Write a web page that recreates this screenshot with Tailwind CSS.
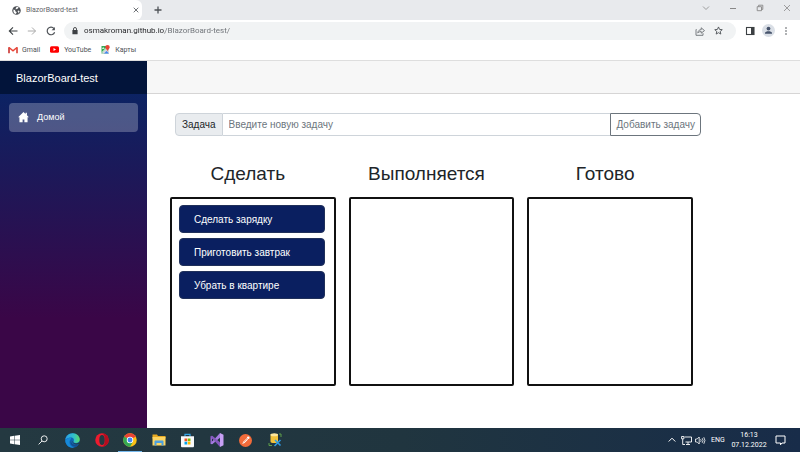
<!DOCTYPE html>
<html lang="ru">
<head>
<meta charset="utf-8">
<title>BlazorBoard-test</title>
<script src="https://cdn.jsdelivr.net/npm/@tailwindcss/browser@4"></script>
</head>
<body class="h-screen flex flex-col overflow-hidden bg-white font-[Roboto,Arial,sans-serif] text-[#212529]">

<!-- Browser chrome -->
<header class="shrink-0 text-[7px] leading-[10px] text-[#5f6368]">
  <div class="flex h-5 bg-[#e8eaed]">
    <div class="flex w-[142px] items-center gap-[5px] rounded-r-md bg-white pl-3 pr-[1px]">
      <svg class="size-[9px] shrink-0" viewBox="0 0 18 18"><circle cx="9" cy="9" r="8.5" fill="#4d5156"/><path d="M3 7l3 1 1 3 2 1v2l-2 2C4 15 2 12 3 7zM9 2h4l-1 3-3 1-1 1-1-1 1-2zM12 9l3 1c0 2-1 4-3 5l1-3-2-1z" fill="#fff"/></svg>
      <span class="grow">BlazorBoard-test</span>
      <button aria-label="Закрыть вкладку" class="p-[2px]"><svg class="size-[6px]" viewBox="0 0 6 6" stroke="#5f6368" stroke-width=".9"><path d="M.7.7l4.600 4.600M5.300.7L.7 5.300"/></svg></button>
    </div>
    <button aria-label="Новая вкладка" class="ml-3 flex items-center"><svg class="size-2" viewBox="0 0 8 8" stroke="#4d5156" stroke-width="1.3"><path d="M4 .5v7M.5 4h7"/></svg></button>
    <div class="ml-auto flex h-4 items-center text-[#888]">
      <button aria-label="Поиск вкладок" class="flex w-[27px] justify-center"><svg class="size-2" viewBox="0 0 8 8" fill="none" stroke="currentColor" stroke-width=".8"><path d="M1 2.5l3 3 3-3"/></svg></button>
      <button aria-label="Свернуть" class="flex w-[27px] justify-center"><svg class="size-2" viewBox="0 0 8 8" stroke="currentColor"><path d="M1 4.5h6"/></svg></button>
      <button aria-label="Развернуть" class="flex w-[27px] justify-center"><svg class="size-2" viewBox="0 0 8 8" fill="none" stroke="currentColor" stroke-width=".9"><path d="M1.2 2.7h4.3v4H1.2zM2.6 2.7V1.2h4.2v4.2H5.5"/></svg></button>
      <button aria-label="Закрыть" class="flex w-[27px] justify-center"><svg class="size-2" viewBox="0 0 8 8" stroke="currentColor" stroke-width=".8"><path d="M1 1l6 6M7 1L1 7"/></svg></button>
    </div>
  </div>
  <div class="flex h-[21px] items-center pl-2 pr-[10px]">
    <button aria-label="Назад"><svg class="size-[10px]" viewBox="0 0 10 10" fill="none" stroke="#3c4043" stroke-width="1.1"><path d="M9.500 5H1.500M5 1.300L1.300 5 5 8.700"/></svg></button>
    <button aria-label="Вперёд" class="ml-[9px]"><svg class="size-[10px]" viewBox="0 0 10 10" fill="none" stroke="#aaa" stroke-width="1"><path d="M.8 5h7.7M5 1.5L8.5 5 5 8.5"/></svg></button>
    <button aria-label="Обновить" class="ml-[9px]"><svg class="size-[10px]" viewBox="0 0 10 10" fill="none" stroke="#4d5156" stroke-width="1.2"><path d="M8.6 6.2A3.8 3.8 0 1 1 8 2.6"/><path d="M5.6 4.2h3.300V1z" fill="#4d5156" stroke="none"/></svg></button>
    <div class="ml-2 flex h-[18px] grow items-center rounded-full bg-[#f1f3f4] pl-2 pr-1">
      <svg class="h-2 w-[6px]" viewBox="0 0 6 8"><path d="M1.5 3V2a1.5 1.5 0 0 1 3 0v1" fill="none" stroke="#3c4043" stroke-width=".9"/><rect x=".4" y="2.9" width="5.2" height="4.4" rx=".5" fill="#3c4043"/></svg>
      <input aria-label="Адресная строка" value="osmakroman.github.io/BlazorBoard-test/" class="ml-[6px] min-w-0 grow bg-[linear-gradient(90deg,#202124_81px,#6b6f74_81px)] bg-clip-text text-[8px] text-transparent">
      <button aria-label="Поделиться"><svg class="size-[10px]" viewBox="0 0 10 10" fill="none" stroke="#6b6f74" stroke-width=".9"><path d="M1.5 3.5H1v5.8h7V7.2M2.8 7c.2-2.1 1.4-3.3 3.4-3.3V1.8L9.5 4.6 6.2 7.2V5.5C4.7 5.5 3.7 6 2.8 7z"/></svg></button>
      <button aria-label="Добавить в закладки" class="mx-[9px]"><svg class="size-[9px]" viewBox="0 0 24 24" fill="none" stroke="#4d5156" stroke-width="2.4"><path d="M12 2.5l2.900 6.600 7.100.7-5.400 4.700 1.600 7L12 17.800l-6.200 3.700 1.600-7L2 9.800l7.100-.7z"/></svg></button>
    </div>
    <button aria-label="Боковая панель" class="ml-[9px]"><svg class="size-[10px]" viewBox="0 0 10 10"><rect x="1.5" y="1.5" width="7.5" height="7" fill="none" stroke="#3c4043" stroke-width="1.1"/><path d="M6 1.5h3v7H6z" fill="#3c4043"/></svg></button>
    <button aria-label="Профиль" class="ml-[7px]"><svg class="size-[13px]" viewBox="0 0 13 13"><circle cx="6.5" cy="6.5" r="6.5" fill="#dadfe6"/><circle cx="6.5" cy="4.6" r="1.9" fill="#46536b"/><path d="M3 9.8V8.900C3 7.700 5 7.200 6.500 7.200s3.500.5 3.500 1.700v.9z" fill="#46536b"/></svg></button>
    <button aria-label="Меню" class="ml-[7px]"><svg class="size-[8px]" viewBox="1 1 8 8" fill="#4d5156"><circle cx="5" cy="2" r=".8"/><circle cx="5" cy="5" r=".8"/><circle cx="5" cy="8" r=".8"/></svg></button>
  </div>
  <nav class="flex h-5 items-center gap-[10px] border-b border-[#dedede] pb-[2px] pl-2 text-[#4d5156]">
    <a href="#gmail" class="flex items-center gap-1"><svg class="h-2 w-[10px]" viewBox="0 0 20 16" fill="none" stroke-width="3"><path d="M2 14.5V2.500" stroke="#c5221f"/><path d="M18 14.500V2.500" stroke="#d93025"/><path d="M2 3l8 6.500L18 3" stroke="#ea4335"/></svg>Gmail</a>
    <a href="#youtube" class="flex items-center gap-[5px]"><svg class="h-[7px] w-[9px]" viewBox="0 0 18 14"><rect y=".5" width="18" height="13" rx="3" fill="#f00"/><path d="M7 4l5 3-5 3z" fill="#fff"/></svg>YouTube</a>
    <a href="#maps" class="flex items-center gap-[5px]"><svg class="size-[9px]" viewBox="0 0 18 18"><path d="M1 2h14v15H1z" fill="#34a853"/><path d="M1 17L12 6l4 4v7z" fill="#d5d9dd"/><path d="M6 17l5-5 5 5z" fill="#4285f4"/><path d="M2 15L14 3" stroke="#fff" stroke-width="2"/><path d="M2 7h5M4.5 4v4" stroke="#fff" stroke-width="1.2"/><path d="M13 0a4.5 4.5 0 0 1 4.5 4.500C17.500 8 13 9 13 13c0-4-4.500-5-4.500-8.500A4.500 4.500 0 0 1 13 0z" fill="#ea4335"/></svg>Карты</a>
  </nav>
</header>

<!-- Application -->
<div class="flex min-h-0 grow font-['Liberation_Sans',Arial,sans-serif]">
  <aside class="w-[147px] shrink-0 bg-[linear-gradient(180deg,#052767_0%,#3a0647_70%)]">
    <div class="flex h-[33px] items-center bg-[#02143a] pl-4"><a href="#" class="text-[11px] leading-4 text-white">BlazorBoard-test</a></div>
    <nav class="px-[9px] pt-[9px]">
      <a href="#" class="flex h-[29px] items-center gap-2 rounded-sm bg-white/25 pl-[9px] text-[9px] text-white">
        <svg class="size-[11px]" viewBox="0 0 16 16" fill="#fff"><path d="M8 0L.2 7.600h1.900V15h4.600v-4.200h2.600V15h4.600V7.600h1.900L13 4.900V1.200h-2V3z"/></svg>
        Домой
      </a>
    </nav>
  </aside>
  <main class="min-w-0 grow">
    <div class="h-[33px] border-b border-[#d6d5d5] bg-[#f7f7f7]"></div>
    <form class="ml-7 mr-[99px] mt-[19px] flex h-[23px] text-[10px]">
      <label for="task" class="flex items-center rounded-l-sm border border-[#ced4da] bg-[#e9ecef] px-[6px]">Задача</label>
      <input id="task" type="text" placeholder="Введите новую задачу" class="min-w-0 grow border-y border-[#ced4da] px-[6px] placeholder:text-[#6c757d]">
      <button type="button" class="rounded-r-sm border border-[#6c757d] px-[5px] text-[#6c757d]">Добавить задачу</button>
    </form>
    <div class="ml-[23px] mr-[107px] mt-[23px] grid grid-cols-3 gap-[13px]">
      <section>
        <h3 class="mb-2 pr-[10px] text-center text-[19px] leading-[30px]">Сделать</h3>
        <ul class="flex h-[189px] flex-col gap-[5px] rounded-xs border-2 border-[#111] py-[6px] pl-[7px] pr-[9px] text-[10px] text-white">
          <li class="flex h-7 items-center rounded-sm border border-[#20305a] bg-[#0a1f60] px-[14px]">Сделать зарядку</li>
          <li class="flex h-7 items-center rounded-sm border border-[#20305a] bg-[#0a1f60] px-[14px]">Приготовить завтрак</li>
          <li class="flex h-7 items-center rounded-sm border border-[#20305a] bg-[#0a1f60] px-[14px]">Убрать в квартире</li>
        </ul>
      </section>
      <section>
        <h3 class="mb-2 pr-[10px] text-center text-[19px] leading-[30px]">Выполняется</h3>
        <ul class="h-[189px] rounded-xs border-2 border-[#111]"></ul>
      </section>
      <section>
        <h3 class="mb-2 pr-[10px] text-center text-[19px] leading-[30px]">Готово</h3>
        <ul class="h-[189px] rounded-xs border-2 border-[#111]"></ul>
      </section>
    </div>
  </main>
</div>

<!-- Windows taskbar -->
<footer class="flex h-6 shrink-0 items-stretch bg-linear-to-r from-[#243941] via-[#20353f] to-[#182c49] text-[7px] text-white">
  <button aria-label="Пуск" class="flex w-[29px] items-center justify-center"><svg class="size-[10px]" viewBox="0 0 20 20" fill="#fff"><path d="M0 2.800L8.500 1.600v7.900H0zM9.500 1.500L20 0v9.500H9.500zM0 10.500h8.500v7.900L0 17.200zM9.500 10.500H20V20L9.500 18.500z"/></svg></button>
  <button aria-label="Поиск" class="flex w-[28px] items-center justify-center"><svg class="size-[10px]" viewBox="0 0 10 10" fill="none" stroke="#fff" stroke-width=".9"><circle cx="6.2" cy="3.8" r="3"/><path d="M4 6L.6 9.400"/></svg></button>
  <button aria-label="Edge" class="flex w-[30px] items-center justify-center"><svg class="size-[15px]" viewBox="0 0 30 30"><defs><linearGradient id="eg"><stop stop-color="#2b9fe8"/><stop offset=".6" stop-color="#32c2c8"/><stop offset="1" stop-color="#5fdc63"/></linearGradient></defs><circle cx="15" cy="15" r="14.5" fill="#0f69b8"/><path d="M.6 14C1.500 6 7.500.5 15.500.5 24 .5 29.500 7 29.500 13c0 4-3.500 7-7.500 7-3.500 0-6-1.500-5-3 2-3 .5-8-5-8C7 9 2 11 .6 14z" fill="url(#eg)"/><path d="M12 12c-6 5-3 15 6 17-9 2-17-5-17.400-14C3 11 8 9 12 9z" fill="#1789d8"/><path d="M14 12c-3 3-2 10 5 11.500 4 .8 7-.5 8.500-1.500-1 2.500-3 4.500-5 5.500C13 28 7 19 14 12z" fill="#164d8c"/><path d="M16.500 17c-1.500 2 2 4 5.500 4 3 0 6-1.500 7.500-4l-1.500 4.500c-5 3-14 1-13-5.500z" fill="#243941"/></svg></button>
  <button aria-label="Opera" class="flex w-[29px] items-center justify-center"><svg class="size-[14px]" viewBox="0 0 28 28"><circle cx="14" cy="14" r="13.5" fill="#ed1b2e"/><path d="M14 .5a13.500 13.500 0 0 1 0 27c8-2 8-25 0-27z" fill="#b50d1e"/><ellipse cx="14" cy="14" rx="5.4" ry="10.2" fill="#243941"/></svg></button>
  <button aria-label="Chrome" class="flex w-[28px] justify-center"><span class="flex w-6 items-center justify-center border-b border-[#76b9ed] pt-px"><svg class="size-[14px]" viewBox="0 0 28 28"><circle cx="14" cy="14" r="13.5" fill="#fbc116"/><path d="M14 14L2.300 7.200A13.500 13.500 0 0 1 25.700 7.200z" fill="#ea4335"/><path d="M2.300 7.200A13.500 13.500 0 0 0 14 27.500L19.800 17.400 14 14z" fill="#34a853"/><circle cx="14" cy="14" r="6.5" fill="#fff"/><circle cx="14" cy="14" r="4.9" fill="#4285f4"/></svg></span></button>
  <button aria-label="Проводник" class="flex w-[29px] items-center justify-center"><svg class="h-3 w-[14px]" viewBox="0 0 28 24"><path d="M1 1h9l2 3h15v5H1z" fill="#e8a921"/><path d="M1 6h26v17H1z" fill="#fcd462"/><path d="M5 23v-8c0-1.500 1-2 2-2h14c1 0 2 .5 2 2v8h-4v-5H9v5z" fill="#4b9fe0"/></svg></button>
  <button aria-label="Microsoft Store" class="flex w-[29px] items-center justify-center"><svg class="size-[15px]" viewBox="0 0 30 30"><path d="M10 7V2.500h10V7" fill="none" stroke="#35a5e5" stroke-width="2.5"/><path d="M2 6.500h26V26c0 1.500-1 2.500-2.500 2.500h-21C3 28.500 2 27.500 2 26z" fill="#f7f9fa"/><path d="M9 11h5.500v5.500H9z" fill="#f25022"/><path d="M15.500 11H21v5.500h-5.500z" fill="#7fba00"/><path d="M9 17.500h5.500V23H9z" fill="#00a4ef"/><path d="M15.500 17.500H21V23h-5.500z" fill="#ffb900"/></svg></button>
  <button aria-label="Visual Studio" class="flex w-[29px] items-center justify-center"><svg class="size-[14px]" viewBox="0 0 28 28"><path d="M1 7l3-1.500 5 4.200v8.600L4 22.500 1 21z" fill="#9466cf"/><path d="M4 10.500v7L8 14z" fill="#243941"/><path d="M20 0v9.500L4 22.500 1 21z" fill="#a47be0"/><path d="M1 7l3-1.500L20 18.500V28z" fill="#8559bd"/><path d="M20 0l7 3.500v21L20 28z" fill="#c7a0f5"/></svg></button>
  <button aria-label="Postman" class="flex w-[29px] items-center justify-center"><svg class="size-[13px]" viewBox="0 0 26 26"><circle cx="13" cy="13" r="13" fill="#f26b3a"/><path d="M6.500 20l2-4.500 7-7 2.500 2.500-7 7z" fill="#fff"/><circle cx="18.5" cy="7.5" r="2.6" fill="#fff"/><path d="M9 17l8-8" stroke="#f26b3a"/></svg></button>
  <button aria-label="SQL Server Management Studio" class="flex w-[29px] items-center justify-center"><svg class="size-[14px]" viewBox="0 0 28 28"><path d="M5 3v14c0 2 3 3 7 3s8-1 8-3V3z" fill="#f2c23a"/><ellipse cx="12.5" cy="3.5" rx="7.5" ry="3" fill="#ffe79c"/><path d="M22 2h4v6M2 20v5h6" fill="none" stroke="#5fa04a" stroke-width="2"/><path d="M14 14l11 11M25 14L13 26" stroke="#2c9be8" stroke-width="3"/></svg></button>
  <div class="ml-auto flex items-center">
    <button aria-label="Скрытые значки"><svg class="size-2" viewBox="0 0 8 8" fill="none" stroke="#fff"><path d="M.7 5.500L4 2.200l3.300 3.300"/></svg></button>
    <svg class="ml-[5px] size-[11px]" viewBox="0 0 11 11" fill="none" stroke="#fff" stroke-width=".9"><path d="M3.500 2h7v5h-6M7 7v2.300M5 9.500h4M.6 1.500v2.300h2.300V1.500zM1.700 4v5.500H4"/></svg>
    <svg class="ml-[3px] size-[11px]" viewBox="0 0 11 11" fill="none" stroke="#fff" stroke-width=".8"><path d="M.5 4h1.700l2-2v7l-2-2H.5zM5.600 4.200q1 1.300 0 2.600M7.200 3.200q1.700 2.300 0 4.600M8.800 2.200q2.300 3.300 0 6.600"/></svg>
    <span class="ml-[5px] w-4">ENG</span>
    <div class="ml-1 w-[36px] whitespace-nowrap text-center leading-[10px]"><div>16:13</div><div>07.12.2022</div></div>
    <button aria-label="Уведомления" class="ml-2 mr-[14px]"><svg class="size-[11px]" viewBox="0 0 11 11" fill="none" stroke="#fff"><path d="M1 1h9v7H7L5.500 9.800V8H1z"/></svg></button>
  </div>
</footer>
</body>
</html>
